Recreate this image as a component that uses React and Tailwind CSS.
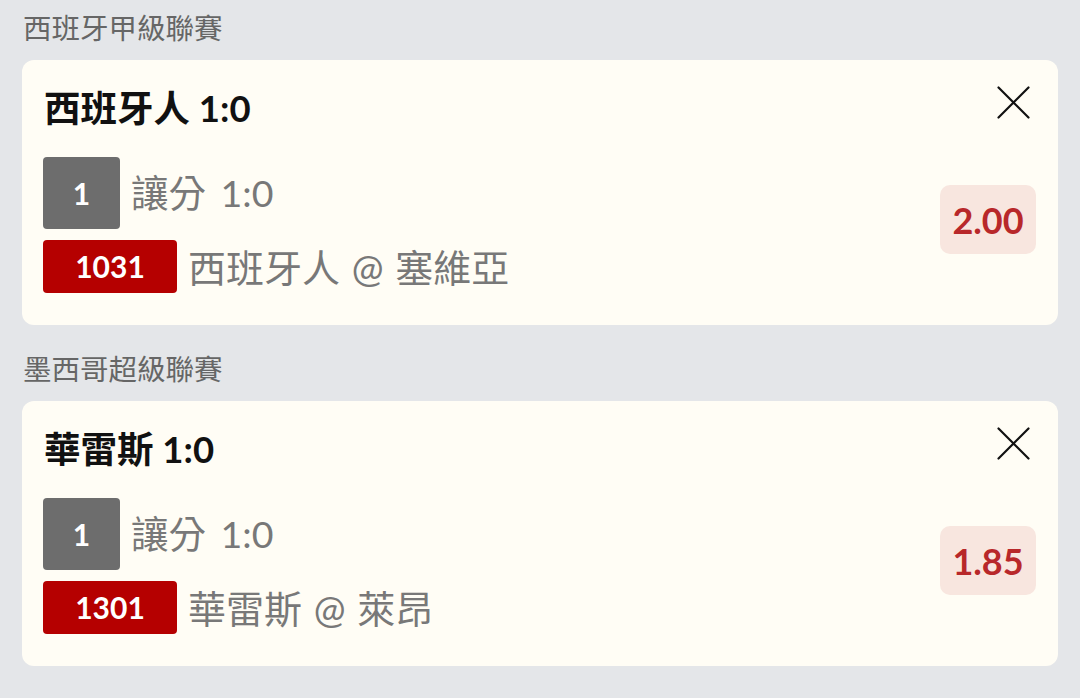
const font = { fontFamily: "Lato, 'Noto Sans CJK TC', sans-serif" };

const bets = [
  { league: "西班牙甲級聯賽", title: "西班牙人 1:0", pick: "1", market: "讓分 1:0", code: "1031", match: "西班牙人 @ 塞維亞", odds: "2.00" },
  { league: "墨西哥超級聯賽", title: "華雷斯 1:0", pick: "1", market: "讓分 1:0", code: "1301", match: "華雷斯 @ 萊昂", odds: "1.85" },
];

const CloseIcon = () => (
  <svg width="33" height="33" viewBox="0 0 33 33" fill="none" stroke="#111" strokeWidth="2.2" strokeLinecap="round">
    <path d="M1.5 1.5 L31.5 31.5 M31.5 1.5 L1.5 31.5" />
  </svg>
);

const BetCard = ({ bet }) => (
  <div className="mx-[22px] rounded-[12px] bg-[#fffdf5] pl-[21px] pr-[22px] pt-[26px] pb-[32px] flex">
    <div className="flex-1 flex flex-col">
      <div className="text-[36.5px] leading-[44px] font-bold text-[#111] pl-[1px]">{bet.title}</div>
      <div className="mt-[27px] flex items-center gap-[11px]">
        <div className="w-[77px] h-[72px] rounded-[4px] bg-[#6d6d6d] text-white text-[30px] font-bold flex items-center justify-center">
          {bet.pick}
        </div>
        <span className="text-[37.5px] text-[#787878] leading-none [word-spacing:5px]">{bet.market}</span>
      </div>
      <div className="mt-[11px] flex items-center gap-[11px]">
        <div className="w-[134px] h-[53px] rounded-[4px] bg-[#b50000] text-white text-[30px] font-bold flex items-center justify-center">
          {bet.code}
        </div>
        <span className="text-[38px] text-[#787878] leading-none [word-spacing:2px]">{bet.match}</span>
      </div>
    </div>
    <div className="flex flex-col items-end">
      <button className="mr-[6px]">
        <CloseIcon />
      </button>
      <div className="mt-[66px] w-[96px] h-[69px] rounded-[10px] bg-[#f8e6df] text-[#b8282a] text-[36px] font-bold flex items-center justify-center">
        {bet.odds}
      </div>
    </div>
  </div>
);

export default function App() {
  return (
    <div className="w-[1080px] h-[698px] bg-[#e4e6e9] overflow-hidden pt-[8px]" style={font}>
      {bets.map((bet, i) => (
        <div key={bet.code} className={i > 0 ? "mt-[24px]" : ""}>
          <div className="pl-[23px] mb-[12px] text-[28.5px] leading-[40px] text-[#666]">{bet.league}</div>
          <BetCard bet={bet} />
        </div>
      ))}
    </div>
  );
}
